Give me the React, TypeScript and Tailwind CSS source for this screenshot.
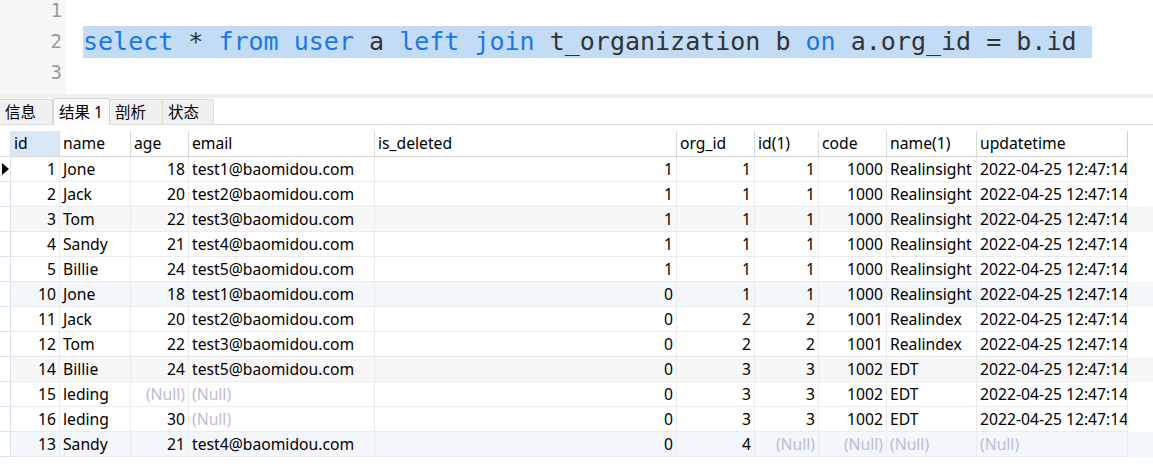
import React from "react";

type Col = { name: string; w: number; right: boolean };

const cols: Col[] = [
  { name: "id", w: 49, right: true },
  { name: "name", w: 71, right: false },
  { name: "age", w: 58, right: true },
  { name: "email", w: 186, right: false },
  { name: "is_deleted", w: 302, right: true },
  { name: "org_id", w: 78, right: true },
  { name: "id(1)", w: 64, right: true },
  { name: "code", w: 68, right: true },
  { name: "name(1)", w: 90, right: false },
  { name: "updatetime", w: 151, right: false },
];

const N = null;
const T = "2022-04-25 12:47:14";
const rows: (string | null)[][] = [
  ["1", "Jone", "18", "test1@baomidou.com", "1", "1", "1", "1000", "Realinsight", T],
  ["2", "Jack", "20", "test2@baomidou.com", "1", "1", "1", "1000", "Realinsight", T],
  ["3", "Tom", "22", "test3@baomidou.com", "1", "1", "1", "1000", "Realinsight", T],
  ["4", "Sandy", "21", "test4@baomidou.com", "1", "1", "1", "1000", "Realinsight", T],
  ["5", "Billie", "24", "test5@baomidou.com", "1", "1", "1", "1000", "Realinsight", T],
  ["10", "Jone", "18", "test1@baomidou.com", "0", "1", "1", "1000", "Realinsight", T],
  ["11", "Jack", "20", "test2@baomidou.com", "0", "2", "2", "1001", "Realindex", T],
  ["12", "Tom", "22", "test3@baomidou.com", "0", "2", "2", "1001", "Realindex", T],
  ["14", "Billie", "24", "test5@baomidou.com", "0", "3", "3", "1002", "EDT", T],
  ["15", "leding", N, N, "0", "3", "3", "1002", "EDT", T],
  ["16", "leding", "30", N, "0", "3", "3", "1002", "EDT", T],
  ["13", "Sandy", "21", "test4@baomidou.com", "0", "4", N, N, N, N],
];

const rowBg = (i: number) => {
  if (i === 2 || i === 8) return "bg-[#f7f7f7]";
  if (i === 5 || i === 11) return "bg-[#f3f7fc]";
  return "bg-white";
};

const K = ({ children }: { children: React.ReactNode }) => (
  <span className="text-[#1a78e6]">{children}</span>
);

export default function App() {
  return (
    <div
      className="w-[1153px] h-[472px] bg-white overflow-hidden text-black"
      style={{ fontFamily: '"Noto Sans", "Noto Sans CJK SC", sans-serif' }}
    >
      {/* Editor */}
      <div className="flex h-[94px] overflow-hidden">
        <div className="w-[66px] shrink-0 bg-[#f7f7f7] flex flex-col -mt-[5px] pr-[4px] text-right text-[#9a9a9a] text-[19px] font-['DejaVu_Sans_Mono',monospace]">
          <div className="h-[31px] leading-[31px]">1</div>
          <div className="h-[31px] leading-[31px]">2</div>
          <div className="h-[31px] leading-[31px]">3</div>
        </div>
        <div className="flex-1 flex flex-col -mt-[5px] pl-[17px] text-[25px] text-[#333] font-['DejaVu_Sans_Mono',monospace] whitespace-pre">
          <div className="h-[31px]" />
          <div className="h-[31px] leading-[31px]">
            <span className="inline-block h-[32px] leading-[32px] bg-[#c2dcf6]">
              <K>select</K> * <K>from</K> <K>user</K> a <K>left</K> <K>join</K> t_organization b <K>on</K> a.org_id = b.id{" "}
            </span>
          </div>
          <div className="h-[31px]" />
        </div>
      </div>

      {/* gray separator */}
      <div className="h-[4px] bg-[#f0f0f0]" />

      {/* Tabs */}
      <div className="h-[27px] flex items-end border-b border-[#dcdcdc] text-[15.5px]">
        <div className="w-[53px] h-[25px] bg-[#f0f0f0] border-t border-r border-[#dcdcdc] pl-[5px] leading-[24px]">信息</div>
        <div className="w-[57px] h-[27px] bg-[#fbfbfb] border-t border-x border-[#d6d6d6] -mb-px pl-[5px] leading-[26px]">结果 1</div>
        <div className="w-[53px] h-[25px] bg-[#f0f0f0] border-t border-r border-[#dcdcdc] pl-[5px] leading-[24px]">剖析</div>
        <div className="w-[51px] h-[25px] bg-[#f0f0f0] border-t border-r border-[#dcdcdc] pl-[5px] leading-[24px]">状态</div>
      </div>

      {/* Grid */}
      <div className="pt-[6px] text-[15.7px]">
        <div className="flex h-[26px]">
          <div className="w-[11px] shrink-0 border-r border-b border-[#d8e2ee]" />
          {cols.map((c, i) => (
            <div
              key={c.name}
              className={`shrink-0 border-r border-b border-[#dadada] pl-[3px] leading-[25px] whitespace-nowrap overflow-hidden ${
                i === 0 ? "bg-[#d9e8f7]" : "bg-white"
              } ${i === cols.length - 1 ? "border-r-[#cfcfcf]" : ""}`}
              style={{ width: c.w }}
            >
              {c.name}
            </div>
          ))}
        </div>
        {rows.map((r, ri) => (
          <div key={ri} className={`flex h-[25px] ${rowBg(ri)}`}>
            <div className="w-[11px] shrink-0 border-r border-b border-[#d8e2ee] bg-white flex items-center">
              {ri === 0 && (
                <svg width="7" height="12" viewBox="0 0 7 12" className="ml-[2px]">
                  <path d="M0 0 L7 6 L0 12 Z" fill="#000" />
                </svg>
              )}
            </div>
            {cols.map((c, ci) => {
              const v = r[ci];
              return (
                <div
                  key={ci}
                  className={`shrink-0 border-r border-b border-[#ebebeb] leading-[24px] whitespace-nowrap overflow-hidden ${
                    c.right ? "text-right pr-[3px]" : "text-left pl-[3px]"
                  } ${v === null ? "text-[#b7c0d3]" : "text-black"}`}
                  style={{ width: c.w }}
                >
                  {v === null ? "(Null)" : v}
                </div>
              );
            })}
          </div>
        ))}
      </div>
    </div>
  );
}
